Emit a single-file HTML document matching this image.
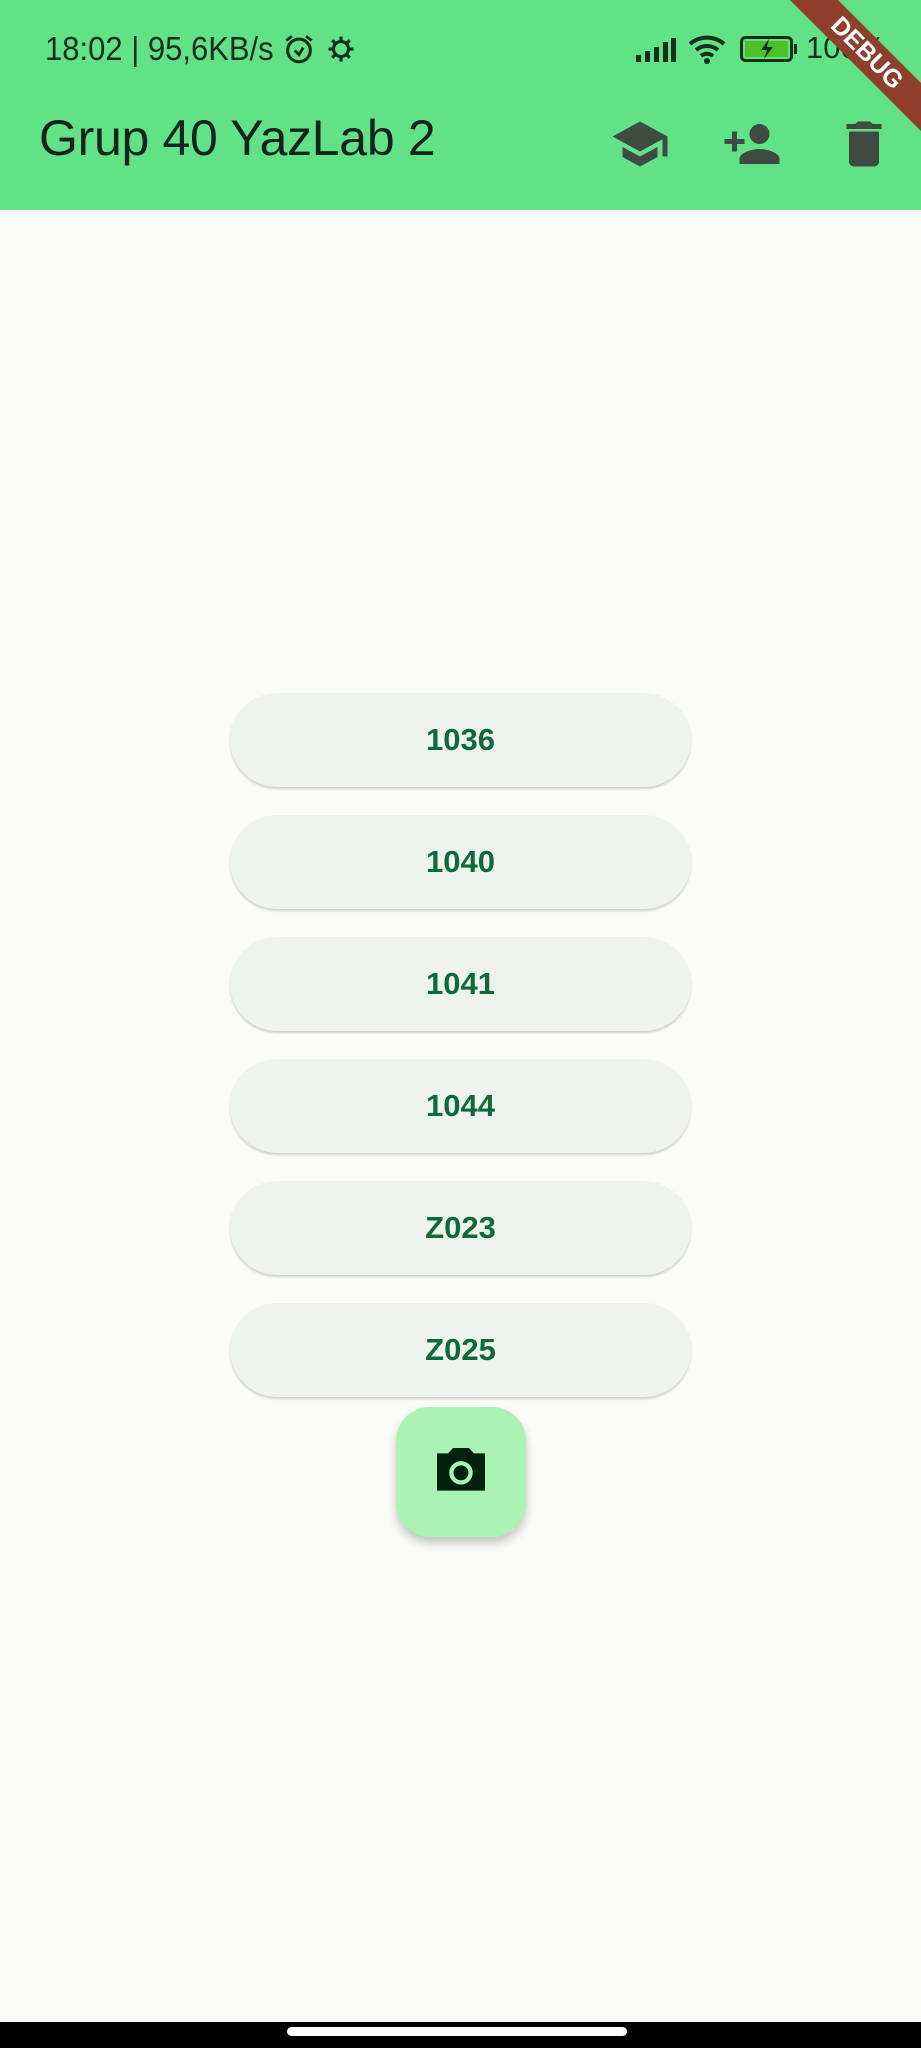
<!DOCTYPE html>
<html><head><meta charset="utf-8"><style>
*{margin:0;padding:0;box-sizing:border-box}
body{width:921px;height:2048px;background:#fbfcf7;position:relative;overflow:hidden;font-family:"Liberation Sans",Roboto,sans-serif}
.bar{position:absolute;left:0;top:0;width:921px;height:210px;background:#62e287}
.st{position:absolute;left:45px;top:30px;font-size:31px;color:#13301b;letter-spacing:0px;transform:scaleY(1.08);transform-origin:left top}
.title{position:absolute;left:39px;top:109px;font-size:50px;color:#14241a;letter-spacing:-0.3px}
.btn{position:absolute;left:230px;width:461px;height:94px;border-radius:47px;background:#eff3ee;box-shadow:0 2px 2px rgba(0,0,0,.18);text-align:center;line-height:94px;font-size:31px;font-weight:bold;color:#0d6b37}
.fab{position:absolute;left:396px;top:1407px;width:130px;height:130px;border-radius:34px;background:#abf2b5;box-shadow:0 6px 10px rgba(0,0,0,.22)}
.nav{position:absolute;left:0;top:2022px;width:921px;height:26px;background:#000}
.pill{position:absolute;left:287px;top:2027px;width:340px;height:9px;border-radius:5px;background:#fff}
.rib{position:absolute;left:737px;top:36px;width:260px;height:34px;background:#8f3f2c;transform:rotate(45deg);color:#fff;font-weight:bold;font-size:25px;text-align:center;line-height:34px;transform-origin:center}
</style></head><body>
<div class="bar"></div>
<div class="st">18:02 | 95,6KB/s</div>
<svg style="position:absolute;left:282px;top:32px" width="34" height="34" viewBox="0 0 24 24"><circle cx="12" cy="13" r="8" fill="none" stroke="#13301b" stroke-width="2.2"/><path d="M9 13l3 3 3-5M3 6l4-3M21 6l-4-3" stroke="#13301b" stroke-width="2" fill="none"/></svg>
<svg style="position:absolute;left:326px;top:34px" width="30" height="30" viewBox="0 0 24 24"><circle cx="12" cy="12" r="6" fill="none" stroke="#13301b" stroke-width="2.5"/><path d="M12 2v4M12 18v4M2 12h4M18 12h4M5 5l3 3M16 16l3 3M5 19l3-3M16 8l3-3" stroke="#13301b" stroke-width="2.5"/></svg>
<svg style="position:absolute;left:636px;top:38px" width="40" height="24"><rect x="0" y="17" width="5" height="7" fill="#13301b"/><rect x="9" y="13" width="5" height="11" fill="#13301b"/><rect x="18" y="9" width="5" height="15" fill="#13301b"/><rect x="27" y="4" width="5" height="20" fill="#13301b"/><rect x="35" y="0" width="5" height="24" fill="#13301b"/></svg>
<svg style="position:absolute;left:688px;top:34px" width="40" height="30" viewBox="0 0 40 30"><path d="M2 10a26 26 0 0 1 34 0M8 16a17 17 0 0 1 22 0M13 22a9 9 0 0 1 12 0" stroke="#13301b" stroke-width="4" fill="none"/><circle cx="19" cy="27" r="3" fill="#13301b"/></svg>
<svg style="position:absolute;left:740px;top:36px" width="58" height="26"><rect x="1.5" y="1.5" width="50" height="23" rx="4" fill="none" stroke="#13301b" stroke-width="3"/><rect x="5" y="5" width="43" height="16" fill="#4cc02a"/><rect x="54" y="8" width="3" height="10" fill="#13301b"/><path d="M29 3l-8 11h6l-3 9 9-12h-6z" fill="#13301b"/></svg>
<div style="position:absolute;left:806px;top:30px;font-size:31px;color:#13301b">100%</div>
<div class="title">Grup 40 YazLab 2</div>
<svg style="position:absolute;left:610px;top:114px" width="60" height="60" viewBox="0 0 24 24"><path d="M5 13.18v4L12 21l7-3.82v-4L12 17l-7-3.82zM12 3L1 9l11 6 9-4.91V17h2V9L12 3z" fill="#3f4a40"/></svg>
<svg style="position:absolute;left:722px;top:114px" width="60" height="60" viewBox="0 0 24 24"><path d="M15 12c2.21 0 4-1.790 4-4s-1.79-4-4-4-4 1.79-4 4 1.79 4 4 4zm-9-2V7H4v3H1v2h3v3h2v-3h3v-2H6zm9 4c-2.670 0-8 1.34-8 4v2h16v-2c0-2.66-5.33-4-8-4z" fill="#3f4a40"/></svg>
<svg style="position:absolute;left:834px;top:114px" width="60" height="60" viewBox="0 0 24 24"><path d="M6 19c0 1.1.9 2 2 2h8c1.1 0 2-.9 2-2V7H6v12zM19 4h-3.5l-1-1h-5l-1 1H5v2h14V4z" fill="#3f4a40"/></svg>
<div class="rib">DEBUG</div>
<div class="btn" style="top:693px">1036</div>
<div class="btn" style="top:815px">1040</div>
<div class="btn" style="top:937px">1041</div>
<div class="btn" style="top:1059px">1044</div>
<div class="btn" style="top:1181px">Z023</div>
<div class="btn" style="top:1303px">Z025</div>
<div class="fab"><svg style="position:absolute;left:33px;top:33px" width="64" height="64" viewBox="0 0 24 24"><path d="M9 3L7.17 5H3v14h18V5h-4.17L15 3H9z" fill="#00210b"/><circle cx="12" cy="12.3" r="3.6" fill="none" stroke="#abf2b5" stroke-width="1.6"/></svg></div>
<div class="nav"></div><div class="pill"></div>
</body></html>
